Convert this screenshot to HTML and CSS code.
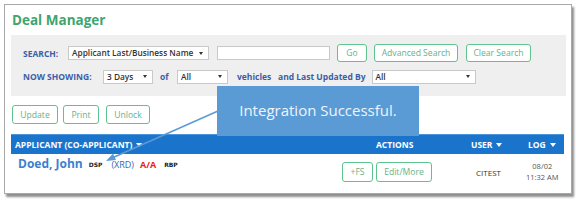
FILE: index.html
```html
<!DOCTYPE html>
<html>
<head>
<meta charset="utf-8">
<link rel="stylesheet" href="styles.css">
</head>
<body>
<div class="frame">
  <h1 class="title">Deal Manager</h1>
  <div class="panel">
    <div class="prow r1">
      <span class="lbl l-search">SEARCH:</span>
      <span class="sel s-field">Applicant Last/Business Name<i class="tri"></i></span>
      <span class="inp"></span>
      <span class="btn b-go">Go</span>
      <span class="btn b-adv">Advanced Search</span>
      <span class="btn b-clear">Clear Search</span>
    </div>
    <div class="prow r2">
      <span class="lbl l-show">NOW SHOWING:</span>
      <span class="sel s-days">3 Days<i class="tri"></i></span>
      <span class="lbl l-of">of</span>
      <span class="sel s-all">All<i class="tri"></i></span>
      <span class="lbl l-veh">vehicles</span>
      <span class="lbl l-upd">and Last Updated By</span>
      <span class="sel s-by">All<i class="tri"></i></span>
    </div>
  </div>
  <div class="toolbar">
    <span class="btn b-upd">Update</span>
    <span class="btn b-print">Print</span>
    <span class="btn b-unlock">Unlock</span>
  </div>
  <div class="thead">
    <span class="th th-app">APPLICANT (CO-APPLICANT)<i class="wtri"></i></span>
    <span class="th th-act">ACTIONS</span>
    <span class="th th-user">USER<i class="wtri"></i></span>
    <span class="th th-log">LOG<i class="wtri"></i></span>
  </div>
  <div class="trow">
    <span class="name">Doed, John</span>
    <span class="tag dsp">DSP</span>
    <span class="xrd">(XRD)</span>
    <span class="aa">A/A</span>
    <span class="tag rbp">RBP</span>
    <span class="acts">
      <span class="btn b-fs">+FS</span>
      <span class="btn b-edit">Edit/More</span>
    </span>
    <span class="user">CITEST</span>
    <span class="log">08/02<br>11:32 AM</span>
  </div>
</div>
<div class="toast">Integration Successful.</div>
<svg class="arrow" width="578" height="203" viewBox="0 0 578 203">
  <line x1="218" y1="111" x2="112" y2="158" stroke="#5b9bd5" stroke-width="1.5"/>
  <polygon points="106,161 113,153.5 116,160" fill="#5b9bd5"/>
</svg>
</body>
</html>
```
FILE: styles.css
```css
* { box-sizing: border-box; }
body {
  margin: 0;
  background: #fff;
  font-family: "Open Sans", "Liberation Sans", sans-serif;
  width: 578px;
  height: 203px;
  position: relative;
  overflow: hidden;
}
.frame {
  margin: 4px 0 0 4px;
  width: 568px;
  height: 190px;
  border: 1px solid #a9a9a9;
  box-shadow: 2px 3px 2px #8f8f8f;
  padding: 0 0 0 6px;
  background: #fff;
}
.title {
  margin: 0;
  height: 30px;
  padding-top: 5px;
  font-size: 13.5px;
  font-weight: 700;
  color: #3fa46d;
  line-height: 20px;
  padding-left: 1px;
}
.panel {
  width: 555px;
  height: 61px;
  background: #efefef;
  padding: 9px 0 0 12px;
}
.prow {
  display: flex;
  align-items: center;
}
.r1 { height: 18px; }
.r2 { height: 13px; margin-top: 8px; }
.lbl {
  font-size: 8.5px;
  font-weight: 700;
  color: #3b5ea8;
  white-space: nowrap;
}
.sel {
  position: relative;
  height: 14px;
  background: #fff;
  border: 1px solid #c9c9c9;
  font-size: 8.3px;
  font-weight: 600;
  color: #333;
  padding-left: 3px;
  line-height: 12px;
  white-space: nowrap;
}
.tri {
  position: absolute;
  right: 5px;
  top: 4.5px;
  width: 0; height: 0;
  border-left: 2.5px solid transparent;
  border-right: 2.5px solid transparent;
  border-top: 3.5px solid #333;
}
.inp {
  height: 14px;
  width: 113px;
  background: #fff;
  border: 1px solid #c9c9c9;
}
.btn {
  display: inline-flex;
  align-items: center;
  justify-content: center;
  height: 18px;
  border: 1.5px solid #5ec38d;
  border-radius: 3px;
  background: #fff;
  color: #62b389;
  font-size: 8.6px;
  white-space: nowrap;
}
.l-search { width: 45px; }
.s-field { width: 141px; margin-right: 8px; }
.inp { margin-right: 7px; }
.b-go { width: 30px; margin-right: 7px; }
.b-adv { width: 84px; margin-right: 8px; }
.b-clear { width: 65px; }
.l-show { width: 80px; }
.s-days { width: 50px; margin-right: 7px; }
.l-of { width: 17px; }
.s-all { width: 51px; margin-right: 9px; }
.l-veh { width: 41px; }
.l-upd { margin-right: 6px; }
.s-by { width: 104px; }

.toolbar {
  display: flex;
  height: 38px;
  padding-top: 9px;
  padding-left: 1px;
}
.b-upd { width: 46px; height: 19px; margin-right: 5px; }
.b-print { width: 36px; height: 19px; margin-right: 7px; }
.b-unlock { width: 44px; height: 19px; }

.thead {
  position: relative;
  width: 553px;
  height: 20px;
  background: #1b74cb;
  border-top: 1px solid #4b95dc;
  display: flex;
  align-items: center;
}
.th {
  position: absolute;
  color: #fff;
  font-size: 8.5px;
  font-weight: 700;
  white-space: nowrap;
}
.wtri {
  display: inline-block;
  margin-left: 4px;
  vertical-align: 1px;
  border-left: 3.5px solid transparent;
  border-right: 3.5px solid transparent;
  border-top: 4px solid #fff;
}
.th-app { left: 4px; }
.th-act { left: 365px; }
.th-user { left: 460px; }
.th-log { left: 517px; }

.trow {
  position: relative;
  display: flex;
  align-items: center;
  height: 32px;
  width: 553px;
}
.name {
  margin-left: 7px;
  margin-top: -13px;
  font-size: 12px;
  font-weight: 700;
  color: #3c7fd2;
  margin-right: 6px;
}
.tag {
  margin-top: -11px;
  font-size: 6px;
  font-weight: 800;
  color: #222;
  font-family: "DejaVu Sans", sans-serif;
}
.dsp { margin-right: 9px; }
.xrd {
  margin-top: -11px;
  font-size: 9px;
  color: #3a66b8;
  margin-right: 6px;
}
.aa {
  margin-top: -11px;
  font-size: 9px;
  font-weight: 700;
  color: #ee2020;
  margin-right: 8px;
}
.acts {
  position: absolute;
  left: 331px;
  top: 8px;
  display: flex;
  gap: 3px;
}
.b-fs { width: 31px; height: 20px; }
.b-edit { width: 56px; height: 20px; }
.user {
  position: absolute;
  left: 465px;
  top: 13px;
  font-size: 8px;
  color: #333;
}
.log {
  position: absolute;
  left: 515px;
  top: 7px;
  font-size: 7.5px;
  color: #555;
  line-height: 11px;
  text-align: center;
}
.toast {
  position: absolute;
  left: 217px;
  top: 86px;
  width: 202px;
  height: 50px;
  background: #5b9bd5;
  color: #eef4fb;
  font-size: 15px;
  font-weight: 400;
  display: flex;
  align-items: center;
  justify-content: center;
  padding-bottom: 3px;
}
.arrow {
  position: absolute;
  left: 0;
  top: 0;
  pointer-events: none;
}
```
